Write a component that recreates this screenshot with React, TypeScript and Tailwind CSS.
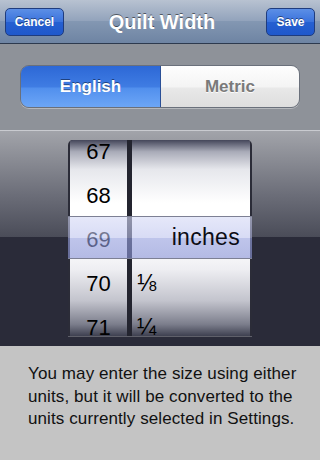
export default function App() {
  const left = ["67", "68", "69", "70", "71"];
  const right = ["", "", "", "⅛", "¼"];

  return (
    <div
      className="w-[320px] h-[460px] overflow-hidden flex flex-col bg-[#c4c4c4]"
      style={{ fontFamily: '"Liberation Sans", Arial, sans-serif' }}
    >
      {/* nav bar */}
      <div className="h-[44px] shrink-0 flex items-center justify-between px-[5px] border-b border-[#2d3a4e] bg-[linear-gradient(to_bottom,#b8c2d1_0%,#91a2bb_50%,#8397b2_50%,#6e84a3_100%)]">
        <button className="w-[59px] h-[28px] rounded-[5px] border border-[#1f3c7e] bg-[linear-gradient(to_bottom,#5c8fe6_0%,#3a72dc_50%,#2660d2_50%,#1f58cb_100%)] text-white text-[12px] font-bold [text-shadow:0_-1px_0_rgba(0,0,0,0.45)]">
          Cancel
        </button>
        <div className="text-white text-[20px] font-bold [text-shadow:0_-1px_0_rgba(0,0,0,0.5)] -ml-[6px]">
          Quilt Width
        </div>
        <button className="w-[49px] h-[28px] rounded-[5px] border border-[#1f3c7e] bg-[linear-gradient(to_bottom,#5c8fe6_0%,#3a72dc_50%,#2660d2_50%,#1f58cb_100%)] text-white text-[12px] font-bold [text-shadow:0_-1px_0_rgba(0,0,0,0.45)]">
          Save
        </button>
      </div>

      {/* segmented control area */}
      <div className="h-[86px] shrink-0 bg-[#8e9299] pt-[21px] px-[20px]">
        <div className="h-[43px] flex rounded-[9px] border border-[#6a707b] overflow-hidden shadow-[0_1px_0_rgba(255,255,255,0.35)]">
          <div className="w-[140px] flex items-center justify-center bg-[linear-gradient(to_bottom,#2d68d6_0%,#3f7ce3_50%,#5290ee_55%,#6ca6f6_100%)] text-white text-[17px] font-bold [text-shadow:0_-1px_0_rgba(0,0,0,0.45)] border-r border-[#2a4f96]">
            English
          </div>
          <div className="flex-1 flex items-center justify-center bg-[linear-gradient(to_bottom,#fefefe_0%,#f4f4f4_50%,#e8e8e8_55%,#dedede_100%)] text-[#7a7a7a] text-[17px] font-bold [text-shadow:0_1px_0_rgba(255,255,255,0.9)]">
            Metric
          </div>
        </div>
      </div>

      {/* picker */}
      <div className="h-[216px] shrink-0 border-t border-[#c9cbd0] bg-[linear-gradient(to_bottom,#a2a4aa_0%,#6b6d78_30%,#4a4c58_49.5%,#2a2b39_49.5%,#2a2b39_100%)] pt-[9px] pl-[68px]">
        <div className="relative w-[184px] h-[196px] rounded-t-[5px] bg-[#2b2c38] px-[2px] flex overflow-hidden shadow-[0_1px_0_rgba(255,255,255,0.25)]">
          <div className="w-[57px] h-full overflow-hidden bg-[linear-gradient(to_bottom,#44465a_0%,#a9abb8_6%,#e6e7ec_15%,#ffffff_32%,#ffffff_52%,#eeeef2_66%,#c3c4cd_82%,#7c7e8c_94%,#3e4050_100%)]">
            <div className="-mt-[11px] flex flex-col">
              {left.map((n) => (
                <div key={n} className="h-[44px] flex items-center justify-center text-[22px] text-black">
                  {n}
                </div>
              ))}
            </div>
          </div>
          <div className="w-[5px] h-full bg-[#23242f]" />
          <div className="flex-1 h-full overflow-hidden bg-[linear-gradient(to_bottom,#44465a_0%,#a9abb8_6%,#e6e7ec_15%,#ffffff_32%,#ffffff_52%,#eeeef2_66%,#c3c4cd_82%,#7c7e8c_94%,#3e4050_100%)]">
            <div className="-mt-[11px] flex flex-col">
              {right.map((t, i) => (
                <div key={i} className="h-[44px] flex items-center pl-[5px] text-[23px] text-black">
                  {t}
                </div>
              ))}
            </div>
          </div>

          {/* selection bar */}
          <div className="absolute left-0 right-0 top-[76px] h-[43px] border-y border-[#7d8094] bg-[linear-gradient(to_bottom,rgba(214,218,246,0.62)_0%,rgba(190,196,238,0.6)_50%,rgba(150,160,222,0.62)_52%,rgba(140,150,216,0.62)_100%)] flex items-center justify-end pr-[12px] text-[23px] tracking-[0.3px] text-[#0c0c14]">
            inches
          </div>
        </div>
      </div>

      {/* info text */}
      <div className="flex-1 pt-[17px] pl-[28px] pr-[14px] text-[17px] tracking-[0.1px] leading-[22.5px] text-[#111]">
        You may enter the size using either units, but it will be converted to the units currently selected in Settings.
      </div>
    </div>
  );
}
